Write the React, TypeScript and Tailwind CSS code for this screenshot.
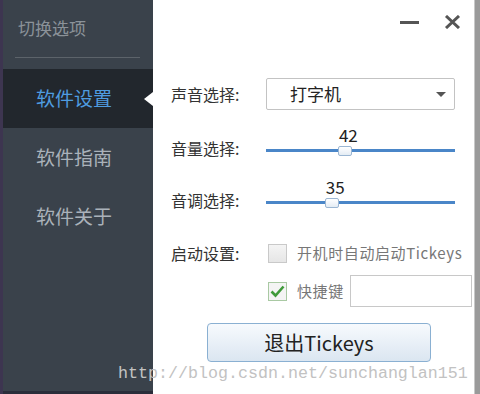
import { useState } from "react";

const font = "font-['Noto_Sans_CJK_SC','Noto_Sans',sans-serif]";

function Slider({ label, value }: { label: string; value: number }) {
  return (
    <div className="flex h-[38px]">
      <div className="w-[95px] pt-[16px] text-[16px] leading-[20px] text-[#333]">{label}</div>
      <div className="relative h-[38px] w-[189px]">
        <div
          className="absolute top-[3px] w-[40px] -translate-x-1/2 text-center text-[17px] leading-[20px] text-[#222]"
          style={{ left: `calc(${value}% + 3px)` }}
        >
          {value}
        </div>
        <div className="absolute inset-x-0 top-[27px] h-[3px] bg-[#4a86c8]" />
        <div
          className="absolute top-[24px] h-[10px] w-[14px] -translate-x-1/2 rounded-[2px] border border-[#9bb6d3] bg-gradient-to-b from-white to-[#e4ecf4]"
          style={{ left: `${value}%` }}
        />
      </div>
    </div>
  );
}

function Check({ checked }: { checked?: boolean }) {
  return (
    <div
      className={
        checked
          ? "flex size-[19px] items-center justify-center border border-[#a9c9a3] bg-[#f4f4f4]"
          : "size-[19px] border border-[#c9c9c9] bg-gradient-to-b from-[#f4f4f4] to-[#e6e6e6]"
      }
    >
      {checked && (
        <svg width="15" height="13" viewBox="0 0 15 13">
          <path d="M1.5 6.5 L5.5 10.5 L13.5 1.5" fill="none" stroke="#3f9a3a" strokeWidth="2.6" />
        </svg>
      )}
    </div>
  );
}

export default function App() {
  const [sound] = useState("打字机");

  return (
    <div className={`relative flex h-[394px] w-[480px] overflow-hidden bg-white ${font}`}>
      <div className="w-[3px] bg-[#3d3550]" />

      {/* sidebar */}
      <div className="flex w-[150px] flex-col bg-[#3a424b]">
        <div className="pl-[15px] pt-[17px] text-[17px] leading-[22px] text-[#8b9299]">切换选项</div>
        <div className="ml-[12px] mt-[18px] h-px w-[125px] bg-[#5c636a]" />
        <div className="mt-[11px] flex flex-col">
          <div className="relative flex h-[59px] items-center bg-[#22272d] pl-[33px] text-[19px] text-[#4f9ce0]">
            软件设置
            <div className="absolute right-0 top-1/2 -translate-y-1/2 border-y-[7px] border-r-[9px] border-y-transparent border-r-white" />
          </div>
          <div className="flex h-[59px] items-center pl-[33px] text-[19px] text-[#aab2ba]">软件指南</div>
          <div className="flex h-[59px] items-center pl-[33px] text-[19px] text-[#aab2ba]">软件关于</div>
        </div>
        <div className="mt-auto h-[3px] bg-[#2a2d3a]" />
      </div>

      {/* settings panel */}
      <div className="flex flex-1 flex-col">
        <div className="flex h-[44px] items-center justify-end gap-[25px] pr-[13px]">
          <div className="h-[3px] w-[19px] bg-[#555]" />
          <svg width="17" height="14" viewBox="0 0 17 14">
            <path d="M2 1 L15 13 M15 1 L2 13" stroke="#555" strokeWidth="3" />
          </svg>
        </div>

        <div className="ml-[18px] mt-[34px] flex h-[32px] items-center">
          <div className="w-[95px] text-[16px] text-[#333]">声音选择:</div>
          <div className="flex h-[32px] w-[189px] items-center justify-between rounded-[2px] border border-[#c3c3c3] pl-[23px] pr-[8px] text-[17px] text-[#222]">
            {sound}
            <svg width="10" height="5" viewBox="0 0 10 5">
              <path d="M0 0 L10 0 L5 5 Z" fill="#555" />
            </svg>
          </div>
        </div>

        <div className="ml-[18px] mt-[12px]">
          <Slider label="音量选择:" value={42} />
        </div>
        <div className="ml-[18px] mt-[14px]">
          <Slider label="音调选择:" value={35} />
        </div>

        <div className="ml-[18px] mt-[31px] flex h-[20px] items-center">
          <div className="w-[97px] text-[16px] text-[#333]">启动设置:</div>
          <Check />
          <div className="ml-[10px] text-[15px] tracking-[0.6px] text-[#777]">开机时自动启动Tickeys</div>
        </div>

        <div className="ml-[115px] mt-[12px] flex h-[32px] items-center">
          <Check checked />
          <div className="ml-[10px] text-[15px] tracking-[0.6px] text-[#777]">快捷键</div>
          <div className="ml-[6px] h-[32px] w-[122px] border border-[#c8c8c8] bg-white" />
        </div>

        <button
          type="button"
          className="ml-[54px] mt-[16px] h-[39px] w-[224px] rounded-[4px] border border-[#8ab0d2] bg-gradient-to-b from-[#f7fafd] to-[#dbe6f1] text-[20px] text-[#222]"
        >
          退出Tickeys
        </button>
      </div>

      <div className="w-[6px] border-l border-[#c8c8c8] bg-[#9a9a9a]" />

      <div className="pointer-events-none absolute left-[118px] top-[365px] font-['Liberation_Mono',monospace] text-[16.67px] leading-[18px] text-[#c2c2c2]">
        http://blog.csdn.net/sunchanglan151
      </div>
    </div>
  );
}
